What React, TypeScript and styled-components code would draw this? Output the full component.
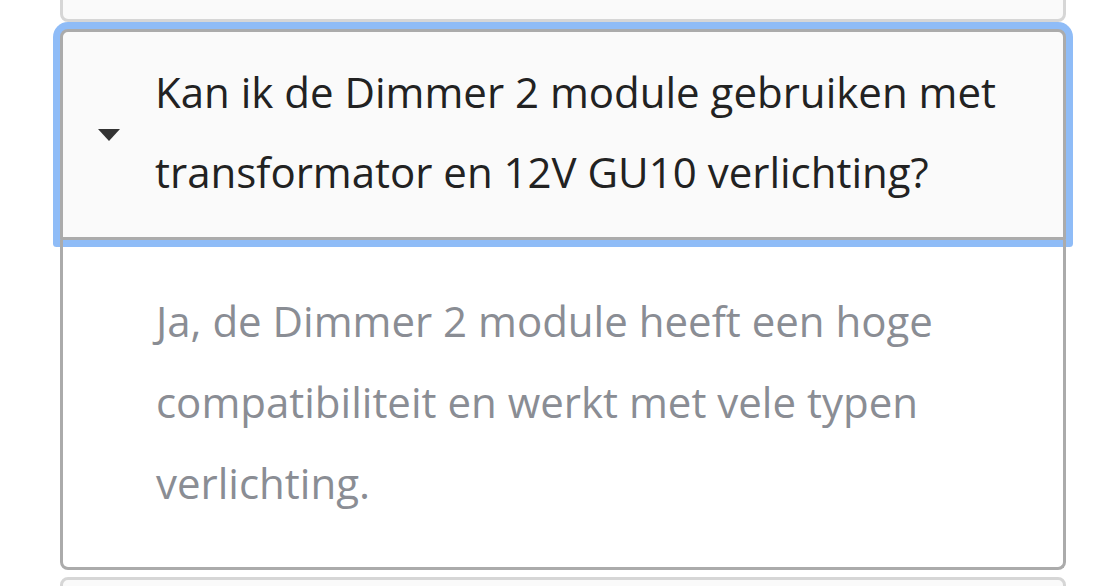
import React, { useState } from 'react';
import styled, { createGlobalStyle } from 'styled-components';

const GlobalStyle = createGlobalStyle`
  html, body {
    margin: 0;
    padding: 0;
    background: #fff;
  }
  body {
    font-family: 'Open Sans', 'Noto Sans', sans-serif;
    overflow: hidden;
  }
`;

const faqs = [
  {
    q: 'Werkt de Dimmer 2 met Z-Wave Plus?',
    a: 'Ja, de Dimmer 2 module ondersteunt Z-Wave Plus.'
  },
  {
    q: 'Kan ik de Dimmer 2 module gebruiken met transformator en 12V GU10 verlichting?',
    a: 'Ja, de Dimmer 2 module heeft een hoge compatibiliteit en werkt met vele typen verlichting.'
  },
  {
    q: 'Heb ik een nuldraad nodig voor de installatie?',
    a: 'Nee, de module werkt ook zonder nuldraad in de inbouwdoos.'
  }
];

export default function App (): React.ReactElement {
  const [openIndex, setOpenIndex] = useState<number | null>(1);

  const toggle = (idx: number) => (evt: React.MouseEvent) => {
    evt.preventDefault();
    setOpenIndex(openIndex === idx ? null : idx);
  };

  return (
    <>
      <GlobalStyle />
      <List>
        {faqs.map((item, idx) => {
          const open = openIndex === idx;
          return (
            <Item key={idx} open={open}>
              <Summary $open={open} onClick={toggle(idx)}>
                <Caret $open={open} />
                <Question>{item.q}</Question>
              </Summary>
              {open && <Answer>{item.a}</Answer>}
            </Item>
          );
        })}
      </List>
    </>
  );
}

const List = styled.div`
  display: flex;
  flex-direction: column;
  gap: 7px;
  width: 1006px;
  margin: -109px 0 0 60px;
`;

const Item = styled.details`
  display: block;
`;

const Summary = styled.summary<{ $open: boolean }>`
  display: flex;
  align-items: center;
  gap: 35px;
  list-style: none;
  cursor: pointer;
  box-sizing: border-box;
  padding: 20px 40px 25px 35px;
  background: #fafafa;
  border: 3px solid ${p => (p.$open ? '#ababab' : '#d6d6d6')};
  border-radius: ${p => (p.$open ? '8px 8px 1px 1px' : '8px')};
  box-shadow: ${p => (p.$open ? '0 0 0 7px #8fbcf7' : 'none')};
  outline: none;

  &::-webkit-details-marker {
    display: none;
  }
`;

const Caret = styled.span<{ $open: boolean }>`
  flex: none;
  width: 0;
  height: 0;
  margin-top: 6px;
  border-left: 11.5px solid transparent;
  border-right: 11.5px solid transparent;
  border-top: 12px solid #333;
  transform: ${p => (p.$open ? 'none' : 'rotate(-90deg)')};
`;

const Question = styled.span`
  font-size: 42px;
  line-height: 80px;
  color: #222;
`;

const Answer = styled.div`
  padding: 40px 40px 44px 93px;
  border: 3px solid #ababab;
  border-top: none;
  border-radius: 0 0 8px 8px;
  font-size: 42px;
  line-height: 81px;
  color: #8a8d94;
`;
